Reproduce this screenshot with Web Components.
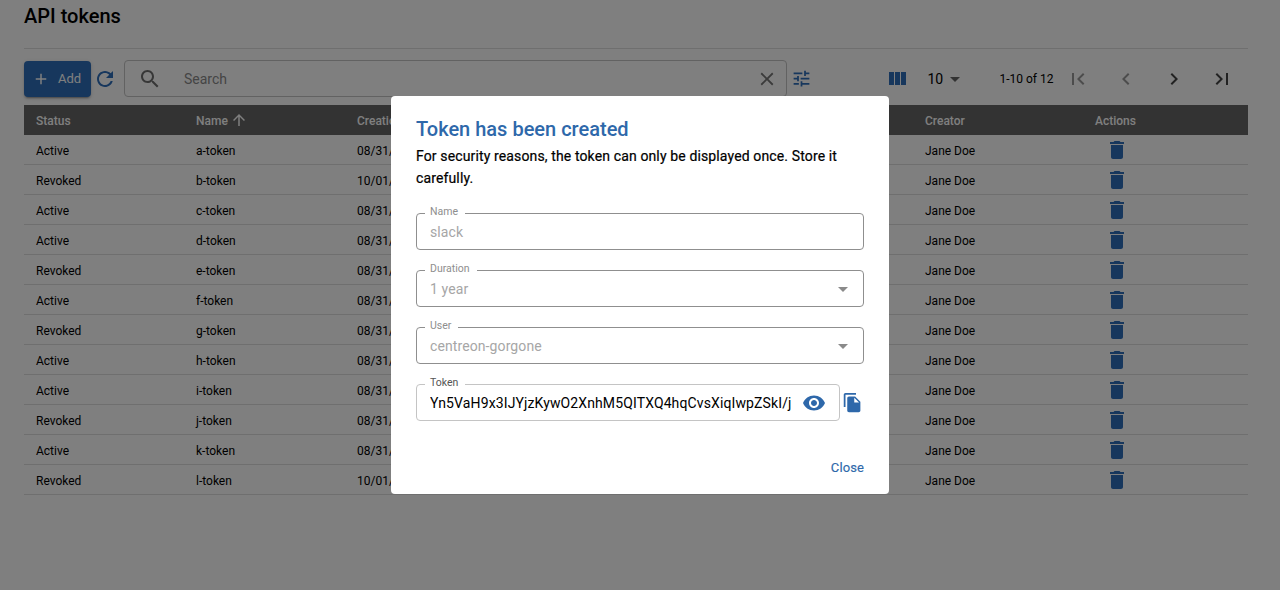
<!DOCTYPE html>
<html lang="en"><head><meta charset="utf-8"><title>API tokens</title>
<style>
html,body{margin:0;height:100%;background:#fff;font-family:Roboto,"Liberation Sans",sans-serif;color:#000}
</style></head><body>
<token-page></token-page>
<script>
const P={add:'M19 13h-6v6h-2v-6H5v-2h6V5h2v6h6v2z',
refresh:'M17.65 6.35C16.2 4.9 14.21 4 12 4c-4.42 0-7.99 3.58-7.99 8s3.57 8 7.99 8c3.73 0 6.84-2.55 7.73-6h-2.08c-.82 2.33-3.04 4-5.65 4-3.31 0-6-2.69-6-6s2.69-6 6-6c1.66 0 3.14.69 4.22 1.78L13 11h7V4l-2.35 2.35z',
search:'M15.5 14h-.79l-.28-.27C15.41 12.59 16 11.11 16 9.5 16 5.91 13.09 3 9.5 3S3 5.91 3 9.5 5.91 16 9.5 16c1.61 0 3.09-.59 4.23-1.57l.27.28v.79l5 4.99L20.49 19l-4.99-5zm-6 0C7.01 14 5 11.99 5 9.5S7.01 5 9.5 5 14 7.01 14 9.5 11.99 14 9.5 14z',
close:'M19 6.41 17.59 5 12 10.59 6.41 5 5 6.41 10.59 12 5 17.59 6.41 19 12 13.41 17.59 19 19 17.59 13.41 12z',
tune:'M3 17v2h6v-2H3zM3 5v2h10V5H3zm10 16v-2h8v-2h-8v-2h-2v6h2zM7 9v2H3v2h4v2h2V9H7zm14 4v-2H11v2h10zm-6-4h2V7h4V5h-4V3h-2v6z',
columns:'M10 18h5V5h-5v13zm-6 0h5V5H4v13zM16 5v13h5V5h-5z',
drop:'M7 10l5 5 5-5z',
first:'M18.41 16.59L13.82 12l4.59-4.59L17 6l-6 6 6 6zM6 6h2v12H6z',
prev:'M15.41 7.41 14 6l-6 6 6 6 1.41-1.41L10.83 12z',
next:'M10 6 8.59 7.41 13.17 12l-4.58 4.59L10 18l6-6z',
last:'M5.59 7.41L10.18 12l-4.59 4.59L7 18l6-6-6-6zM16 6h2v12h-2z',
up:'M4 12l1.41 1.41L11 7.83V20h2V7.83l5.58 5.59L20 12l-8-8-8 8z',
trash:'M6 19c0 1.1.9 2 2 2h8c1.1 0 2-.9 2-2V7H6v12zM19 4h-3.5l-1-1h-5l-1 1H5v2h14V4z',
eye:'M12 4.5C7 4.5 2.73 7.61 1 12c1.73 4.39 6 7.5 11 7.5s9.27-3.11 11-7.5c-1.73-4.39-6-7.5-11-7.5zM12 17c-2.76 0-5-2.24-5-5s2.24-5 5-5 5 2.24 5 5-2.24 5-5 5zm0-8c-1.66 0-3 1.34-3 3s1.34 3 3 3 3-1.34 3-3-1.34-3-3-3z',
copy:'M16 1H4c-1.1 0-2 .9-2 2v14h2V3h12V1zm-1 4 6 6v10c0 1.1-.9 2-2 2H7.99C6.89 23 6 22.1 6 21l.01-14c0-1.1.89-2 1.99-2h7zm-1 7h5.5L14 6.5V12z'};
const BLUE='#2e68aa',DIM='#2f6fba';
function def(name,html,extra){customElements.define(name,class extends HTMLElement{
  constructor(){super();this.attachShadow({mode:'open'}).innerHTML=html;}
  connectedCallback(){extra&&extra.call(this);}
});}
class AppIcon extends HTMLElement{
  constructor(){super();this.attachShadow({mode:'open'});}
  connectedCallback(){const s=this.getAttribute('size')||24;
    this.shadowRoot.innerHTML=`<style>:host{display:inline-flex;flex:none;color:inherit}svg{display:block;fill:currentColor}</style><svg width="${s}" height="${s}" viewBox="0 0 24 24" aria-hidden="true"><path d="${P[this.getAttribute('name')]}"/></svg>`;}
}
customElements.define('app-icon',AppIcon);

def('page-title',`<style>:host{display:block;height:48px;border-bottom:1px solid #dedede}
h1{margin:0;font:500 20px/32px Roboto,sans-serif;color:#000}</style><h1><slot></slot></h1>`);

def('add-button',`<style>:host{display:flex;align-items:center;box-sizing:border-box;width:67px;height:36px;background:${DIM};color:#fff;border-radius:4px;padding-left:8px;gap:8px;font:400 13px Roboto,sans-serif;box-shadow:0 3px 1px -2px rgba(0,0,0,.2),0 2px 2px rgba(0,0,0,.14),0 1px 5px rgba(0,0,0,.12)}</style><app-icon name="add" size="18"></app-icon><slot></slot>`);

def('search-box',`<style>:host{display:flex;align-items:center;box-sizing:border-box;width:663px;height:37px;border:1px solid #c4c4c4;border-radius:4px}
.s{margin-left:13px;color:#6f6f6f}.t{flex:1;margin-left:22px;font:14px Roboto,sans-serif;color:#8a8a8a}.c{margin-right:8px;color:#777}</style>
<app-icon class="s" name="search"></app-icon><span class="t"><slot></slot></span><app-icon class="c" name="close" size="22"></app-icon>`);

def('table-pager',`<style>:host{display:flex;align-items:center;flex:none;margin-left:71px;color:#000;font:12px Roboto,sans-serif}
.col{color:${DIM}}.sel{display:flex;align-items:center;margin-left:19px;font-size:14px;width:42px}.d{color:#666}
.lbl{margin-left:30px;width:54px;white-space:nowrap}.n{margin-left:24px;color:#444}.n.off{color:#999}
.lbl+.n{margin-left:12px}</style>
<app-icon class="col" name="columns"></app-icon>
<span class="sel">10<app-icon class="d" name="drop"></app-icon></span>
<span class="lbl"><slot></slot></span>
<app-icon class="n off" name="first"></app-icon><app-icon class="n off" name="prev"></app-icon><app-icon class="n" name="next"></app-icon><app-icon class="n" name="last"></app-icon>`);

def('tool-bar',`<style>:host{display:flex;align-items:center;height:37px;margin-top:11px;color:${DIM}}
.r{margin-left:2px;margin-right:7px}.t{margin-left:3.5px;margin-right:2px}</style>
<add-button>Add</add-button><app-icon class="r" name="refresh"></app-icon><search-box>Search</search-box><app-icon class="t" name="tune" size="21"></app-icon><table-pager>1-10 of 12</table-pager>`);

const GRID='display:grid;grid-template-columns:160px 161px 568px 170px 165px;align-items:center';
def('table-head',`<style>:host{${GRID};height:30px;margin-top:8px;background:#666;color:#fff;font:500 12px Roboto,sans-serif}
span{padding:1px 0 0 12px;display:flex;align-items:center;gap:2px}app-icon{margin-top:-1px}</style>
<span>Status</span><span>Name<app-icon name="up" size="18"></app-icon></span><span>Creation date</span><span>Creator</span><span>Actions</span>`);

class TokenRow extends HTMLElement{
  constructor(){super();this.attachShadow({mode:'open'});}
  connectedCallback(){const a=n=>this.getAttribute(n);
    this.shadowRoot.innerHTML=`<style>:host{${GRID};box-sizing:border-box;height:30px;border-bottom:1px solid #dedede;color:#000;font:12px Roboto,sans-serif}
    span{padding:2px 0 0 12px}.a{display:flex;padding:1px 0 0 22px}.a app-icon{color:${DIM}}</style>
    <span>${a('status')}</span><span>${a('token')}</span><span>${a('date')}</span><span>Jane Doe</span><span class="a"><app-icon name="trash" size="24"></app-icon></span>`;}
}
customElements.define('token-row',TokenRow);

def('outline-field',`<style>:host{display:flex;align-items:center;position:relative;box-sizing:border-box;height:37px;border:1px solid #8f8f8f;border-radius:4px;padding-left:13px;color:#a6a6a6;font:14px Roboto,sans-serif;letter-spacing:.1px}
:host([active]){border-color:#c4c4c4;color:#000;letter-spacing:.12px}
label{position:absolute;left:8px;top:-9px;padding:0 7px 0 5px;background:#fff;font:10.5px/14px Roboto,sans-serif;letter-spacing:0;color:#8e8e8e}
:host([active]) label{color:#555}
.v{flex:1;white-space:nowrap;overflow:hidden}::slotted(.end-drop){margin-right:8px}::slotted(.end-eye){margin-right:13px}</style>
<label></label><span class="v"><slot></slot></span><slot name="end"></slot>`,function(){this.shadowRoot.querySelector('label').textContent=this.getAttribute('label');});

def('token-dialog',`<style>:host{display:flex;flex-direction:column;box-sizing:border-box;width:498px;height:398px;padding:20px 25px 0;background:#fff;border-radius:4px}
h2{margin:0;font:500 20px/26px Roboto,sans-serif;color:${BLUE}}
p{margin:3px 0 0;font:400 14px/22px Roboto,sans-serif;letter-spacing:.13px;color:#000;-webkit-text-stroke:.2px #000}
.fields{display:flex;flex-direction:column;gap:20px;margin-top:24px}
.tok{display:flex;align-items:center;gap:2px}.tok outline-field{flex:none;width:424px}
.copy,.end-eye{color:${BLUE}}
.end-drop{color:#8a8a8a}
.foot{display:flex;justify-content:flex-end;margin-top:39px;font:400 13px/16px Roboto,sans-serif;letter-spacing:.1px;color:${BLUE};-webkit-text-stroke:.15px ${BLUE}}</style>
<h2>Token has been created</h2>
<p>For security reasons, the token can only be displayed once. Store it carefully.</p>
<div class="fields">
<outline-field label="Name">slack</outline-field>
<outline-field label="Duration">1 year<app-icon class="end-drop" slot="end" name="drop"></app-icon></outline-field>
<outline-field label="User">centreon-gorgone<app-icon class="end-drop" slot="end" name="drop"></app-icon></outline-field>
<div class="tok"><outline-field active label="Token">Yn5VaH9x3IJYjzKywO2XnhM5QITXQ4hqCvsXiqIwpZSkI/j<app-icon class="end-eye" slot="end" name="eye"></app-icon></outline-field><app-icon class="copy" name="copy" size="21"></app-icon></div>
</div>
<div class="foot"><span>Close</span></div>`);

def('modal-overlay',`<style>:host{position:fixed;inset:0;display:flex;align-items:center;justify-content:center;background:rgba(0,0,0,.5)}</style><slot></slot>`);

const rows=[['Active','a','08/31/2024'],['Revoked','b','10/01/2024'],['Active','c','08/31/2024'],['Active','d','08/31/2024'],['Revoked','e','08/31/2024'],['Active','f','08/31/2024'],['Revoked','g','08/31/2024'],['Active','h','08/31/2024'],['Active','i','08/31/2024'],['Revoked','j','08/31/2024'],['Active','k','08/31/2024'],['Revoked','l','10/01/2024']];
def('token-page',`<style>:host{display:block;padding:0 32px 0 24px}</style>
<page-title>API tokens</page-title><tool-bar></tool-bar><table-head></table-head>
${rows.map(r=>`<token-row status="${r[0]}" token="${r[1]}-token" date="${r[2]}"></token-row>`).join('')}
<modal-overlay><token-dialog></token-dialog></modal-overlay>`);
</script>
</body></html>
